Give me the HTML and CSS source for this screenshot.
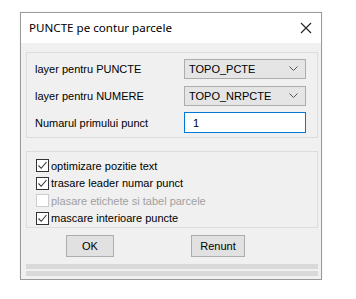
FILE: index.html
```html
<!DOCTYPE html>
<html>
<head>
<meta charset="utf-8">
<link rel="stylesheet" href="styles.css">
</head>
<body>
<div class="window">
  <div class="titlebar">
    <span class="title">PUNCTE pe contur parcele</span>
    <svg class="close" width="12" height="12" viewBox="0 0 12 12"><path d="M1 1L11 11M11 1L1 11" stroke="#222" stroke-width="1.1" fill="none"/></svg>
  </div>
  <div class="content">
    <div class="group g1">
      <div class="row">
        <span class="label">layer pentru PUNCTE</span>
        <div class="combo"><span>TOPO_PCTE</span><svg width="9" height="5" viewBox="0 0 9 5"><path d="M0.5 0.5L4.5 4.5L8.5 0.5" stroke="#555" fill="none"/></svg></div>
      </div>
      <div class="row">
        <span class="label">layer pentru NUMERE</span>
        <div class="combo"><span>TOPO_NRPCTE</span><svg width="9" height="5" viewBox="0 0 9 5"><path d="M0.5 0.5L4.5 4.5L8.5 0.5" stroke="#555" fill="none"/></svg></div>
      </div>
      <div class="row">
        <span class="label">Numarul primului punct</span>
        <div class="input">1</div>
      </div>
    </div>
    <div class="group g2">
      <div class="check"><span class="box on"><svg width="11" height="11" viewBox="0 0 11 11"><path d="M1.5 5.5L4.2 8.3L9.5 2" stroke="#333" stroke-width="1.1" fill="none"/></svg></span><span>optimizare pozitie text</span></div>
      <div class="check"><span class="box on"><svg width="11" height="11" viewBox="0 0 11 11"><path d="M1.5 5.5L4.2 8.3L9.5 2" stroke="#333" stroke-width="1.1" fill="none"/></svg></span><span>trasare leader numar punct</span></div>
      <div class="check disabled"><span class="box"></span><span>plasare etichete si tabel parcele</span></div>
      <div class="check"><span class="box on"><svg width="11" height="11" viewBox="0 0 11 11"><path d="M1.5 5.5L4.2 8.3L9.5 2" stroke="#333" stroke-width="1.1" fill="none"/></svg></span><span>mascare interioare puncte</span></div>
    </div>
    <div class="buttons">
      <div class="btn ok">OK</div>
      <div class="btn cancel">Renunt</div>
    </div>
    <div class="bar"></div>
    <div class="bar"></div>
  </div>
</div>
</body>
</html>
```

FILE: styles.css
```css
html, body {
  margin: 0;
  padding: 0;
  background: #fff;
}
body {
  padding: 12px 0 0 20px;
  font-family: "Liberation Sans", Arial, sans-serif;
  font-size: 11px;
  color: #000;
}
.window {
  width: 300px;
  height: 266px;
  border: 1px solid #9a9a9a;
  background: #f0f0f0;
  display: flex;
  flex-direction: column;
  box-shadow: 0 0 2px rgba(0,0,0,0.08);
}
.titlebar {
  height: 30px;
  background: #fff;
  display: flex;
  align-items: center;
  justify-content: space-between;
  padding: 0 8px 0 8px;
}
.title {
  font-family: "Noto Sans", "Open Sans", sans-serif;
  font-size: 11.6px;
  color: #000;
  margin-top: -1px;
}
.close {
  margin-right: 1px;
}
.content {
  display: flex;
  flex-direction: column;
  padding: 9px 3px 0 5px;
}
.group {
  border: 1px solid #dcdcdc;
  box-sizing: border-box;
}
.g1 {
  height: 86px;
  padding: 5px 11px 0 8px;
  display: flex;
  flex-direction: column;
  gap: 6px;
}
.row {
  display: flex;
  align-items: center;
  justify-content: space-between;
  height: 21px;
}
.combo {
  width: 122px;
  height: 20px;
  box-sizing: border-box;
  border: 1px solid #adadad;
  background: #e5e5e5;
  display: flex;
  align-items: center;
  justify-content: space-between;
  padding: 0 7px 0 4px;
  font-size: 11px;
}
.input {
  width: 122px;
  height: 21px;
  box-sizing: border-box;
  border: 1px solid #0078d7;
  background: #fff;
  padding: 0 0 0 8px;
  display: flex;
  align-items: center;
}
.g2 {
  margin-top: 13px;
  height: 77px;
  padding: 5px 0 0 9px;
  display: flex;
  flex-direction: column;
}
.check {
  display: flex;
  align-items: center;
  height: 17.7px;
  gap: 2px;
}
.box {
  width: 13px;
  height: 13px;
  box-sizing: border-box;
  border: 1px solid #333;
  background: #fff;
  display: flex;
  align-items: center;
  justify-content: center;
}
.disabled {
  color: #a0a0a0;
}
.disabled .box {
  border-color: #cccccc;
}
.buttons {
  display: flex;
  height: 22px;
  margin-top: 7px;
}
.btn {
  height: 22px;
  box-sizing: border-box;
  border: 1px solid #adadad;
  background: #e1e1e1;
  display: flex;
  align-items: center;
  justify-content: center;
}
.ok {
  width: 48px;
  margin-left: 40px;
}
.cancel {
  width: 54px;
  margin-left: 77px;
}
.bar {
  height: 5px;
  background: #d9d9d9;
  margin-top: 2px;
}
.buttons + .bar {
  margin-top: 7px;
}
```
